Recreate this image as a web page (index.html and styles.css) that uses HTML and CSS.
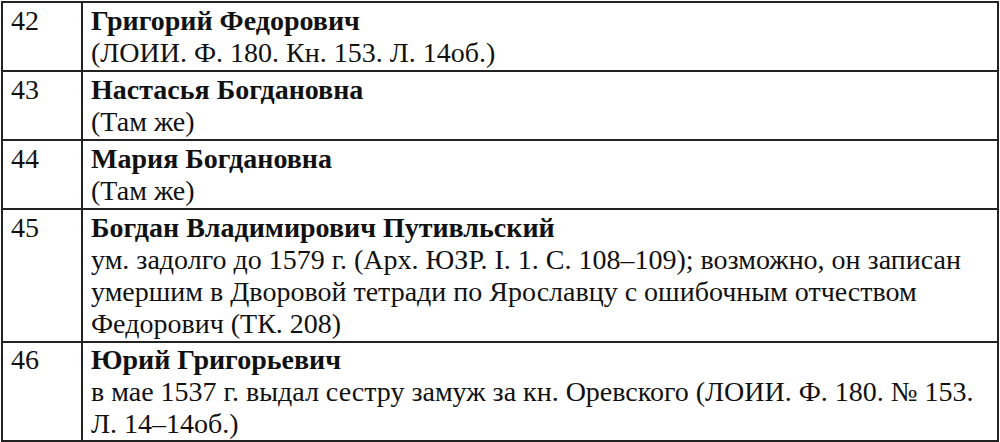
FILE: index.html
```html
<!DOCTYPE html>
<html>
<head>
<meta charset="utf-8">
<link rel="stylesheet" href="styles.css">
</head>
<body>
<table class="list">
  <tr>
    <td class="num">42</td>
    <td class="entry"><b>Григорий Федорович</b><br>(ЛОИИ. Ф. 180. Кн. 153. Л. 14об.)</td>
  </tr>
  <tr>
    <td class="num">43</td>
    <td class="entry"><b>Настасья Богдановна</b><br>(Там же)</td>
  </tr>
  <tr>
    <td class="num">44</td>
    <td class="entry"><b>Мария Богдановна</b><br>(Там же)</td>
  </tr>
  <tr>
    <td class="num">45</td>
    <td class="entry"><b>Богдан Владимирович Путивльский</b><br>ум. задолго до 1579 г. (Арх. ЮЗР. I. 1. С. 108–109); возможно, он записан умершим в Дворовой тетради по Ярославцу с ошибочным отчеством Федорович (ТК. 208)</td>
  </tr>
  <tr class="last">
    <td class="num">46</td>
    <td class="entry"><b>Юрий Григорьевич</b><br>в мае 1537 г. выдал сестру замуж за кн. Оревского (ЛОИИ. Ф. 180. № 153. Л. 14–14об.)</td>
  </tr>
</table>
</body>
</html>
```
FILE: styles.css
```css
html, body {
  margin: 0;
  padding: 0;
  background: #fff;
}
body {
  padding: 1px 0 0 1px;
}
.list {
  border-collapse: collapse;
  width: 998px;
  font-family: "Liberation Serif", "DejaVu Serif", serif;
  font-size: 28px;
  line-height: 32px;
  color: #111;
}
.list td {
  border: 2px solid #222;
  vertical-align: top;
  padding: 2px 8px 1px 8px;
}
.list .last td {
  padding-top: 1px;
  padding-bottom: 0;
}
.list .num {
  width: 62px;
}
.list .entry b {
  font-weight: bold;
}
```
